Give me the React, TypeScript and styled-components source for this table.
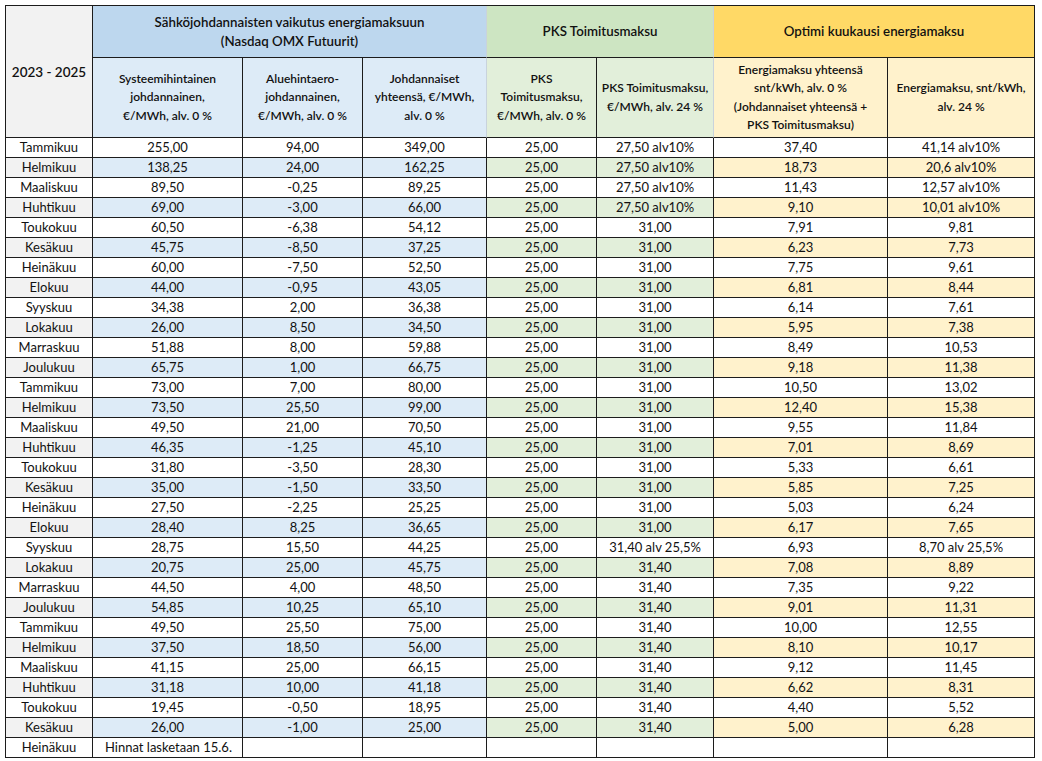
import React from 'react'
import styled, { createGlobalStyle } from 'styled-components'

const GlobalStyle = createGlobalStyle`
  html, body {
    margin: 0;
    background: #ffffff;
  }
  body {
    padding: 5px 0 0 5px;
    font-family: Lato, 'Liberation Sans', sans-serif;
    color: #111111;
  }
`

type Group = 'year' | 'blue' | 'green' | 'yellow'

const HEAD: Record<Group, string> = {
  year: '#f2f2f2',
  blue: '#bdd7ee',
  green: '#cde5c2',
  yellow: '#ffd966',
}

const LIGHT: Record<Group, string> = {
  year: '#f2f2f2',
  blue: '#ddebf7',
  green: '#e2efda',
  yellow: '#fff2cc',
}

const DARK = '#1c1c1c'
const SOFT = '#c9d3dc'

const Sheet = styled.table`
  border-collapse: separate;
  border-spacing: 0;
  table-layout: fixed;
  width: 1030px;
  border-top: 1px solid ${DARK};
  border-left: 1px solid ${DARK};
  font-size: 13px;
`

const GroupHead = styled.th<{ $group: Group; $soft?: boolean }>`
  height: 51px;
  padding: 0 6px;
  background: ${(p) => HEAD[p.$group]};
  border-right: 1px solid ${(p) => (p.$soft ? SOFT : DARK)};
  border-bottom: 1px solid ${DARK};
  font-size: 13.3px;
  font-weight: 600;
  line-height: 19px;
  text-align: center;
  vertical-align: middle;
`

const YearHead = styled.th`
  padding: 0 2px;
  background: ${HEAD.year};
  border-right: 1px solid ${DARK};
  border-bottom: 1px solid ${DARK};
  font-size: 13.5px;
  font-weight: 600;
  text-align: center;
  vertical-align: middle;
`

const SubHead = styled.th<{ $group: Group; $soft?: boolean }>`
  height: 79px;
  padding: 0 2px;
  background: ${(p) => LIGHT[p.$group]};
  border-right: 1px solid ${(p) => (p.$soft ? SOFT : DARK)};
  border-bottom: 1px solid ${DARK};
  font-size: 12px;
  font-weight: 600;
  line-height: 18.5px;
  text-align: center;
  vertical-align: middle;
`

const Cell = styled.td<{ $bg: string; $left?: boolean }>`
  height: 19px;
  padding: ${(p) => (p.$left ? '0 0 0 12px' : '0')};
  background: ${(p) => p.$bg};
  border-right: 1px solid ${DARK};
  border-bottom: 1px solid ${DARK};
  text-align: ${(p) => (p.$left ? 'left' : 'center')};
  vertical-align: middle;
  white-space: nowrap;
  overflow: visible;
  line-height: 19px;
`

const widths = [87, 150, 120, 124, 110, 117, 174, 147]
const groups: Group[] = ['year', 'blue', 'blue', 'blue', 'green', 'green', 'yellow', 'yellow']

const rows: string[][] = [
  ['Tammikuu', '255,00', '94,00', '349,00', '25,00', '27,50 alv10%', '37,40', '41,14 alv10%'],
  ['Helmikuu', '138,25', '24,00', '162,25', '25,00', '27,50 alv10%', '18,73', '20,6 alv10%'],
  ['Maaliskuu', '89,50', '-0,25', '89,25', '25,00', '27,50 alv10%', '11,43', '12,57 alv10%'],
  ['Huhtikuu', '69,00', '-3,00', '66,00', '25,00', '27,50 alv10%', '9,10', '10,01 alv10%'],
  ['Toukokuu', '60,50', '-6,38', '54,12', '25,00', '31,00', '7,91', '9,81'],
  ['Kesäkuu', '45,75', '-8,50', '37,25', '25,00', '31,00', '6,23', '7,73'],
  ['Heinäkuu', '60,00', '-7,50', '52,50', '25,00', '31,00', '7,75', '9,61'],
  ['Elokuu', '44,00', '-0,95', '43,05', '25,00', '31,00', '6,81', '8,44'],
  ['Syyskuu', '34,38', '2,00', '36,38', '25,00', '31,00', '6,14', '7,61'],
  ['Lokakuu', '26,00', '8,50', '34,50', '25,00', '31,00', '5,95', '7,38'],
  ['Marraskuu', '51,88', '8,00', '59,88', '25,00', '31,00', '8,49', '10,53'],
  ['Joulukuu', '65,75', '1,00', '66,75', '25,00', '31,00', '9,18', '11,38'],
  ['Tammikuu', '73,00', '7,00', '80,00', '25,00', '31,00', '10,50', '13,02'],
  ['Helmikuu', '73,50', '25,50', '99,00', '25,00', '31,00', '12,40', '15,38'],
  ['Maaliskuu', '49,50', '21,00', '70,50', '25,00', '31,00', '9,55', '11,84'],
  ['Huhtikuu', '46,35', '-1,25', '45,10', '25,00', '31,00', '7,01', '8,69'],
  ['Toukokuu', '31,80', '-3,50', '28,30', '25,00', '31,00', '5,33', '6,61'],
  ['Kesäkuu', '35,00', '-1,50', '33,50', '25,00', '31,00', '5,85', '7,25'],
  ['Heinäkuu', '27,50', '-2,25', '25,25', '25,00', '31,00', '5,03', '6,24'],
  ['Elokuu', '28,40', '8,25', '36,65', '25,00', '31,00', '6,17', '7,65'],
  ['Syyskuu', '28,75', '15,50', '44,25', '25,00', '31,40 alv 25,5%', '6,93', '8,70 alv 25,5%'],
  ['Lokakuu', '20,75', '25,00', '45,75', '25,00', '31,40', '7,08', '8,89'],
  ['Marraskuu', '44,50', '4,00', '48,50', '25,00', '31,40', '7,35', '9,22'],
  ['Joulukuu', '54,85', '10,25', '65,10', '25,00', '31,40', '9,01', '11,31'],
  ['Tammikuu', '49,50', '25,50', '75,00', '25,00', '31,40', '10,00', '12,55'],
  ['Helmikuu', '37,50', '18,50', '56,00', '25,00', '31,40', '8,10', '10,17'],
  ['Maaliskuu', '41,15', '25,00', '66,15', '25,00', '31,40', '9,12', '11,45'],
  ['Huhtikuu', '31,18', '10,00', '41,18', '25,00', '31,40', '6,62', '8,31'],
  ['Toukokuu', '19,45', '-0,50', '18,95', '25,00', '31,40', '4,40', '5,52'],
  ['Kesäkuu', '26,00', '-1,00', '25,00', '25,00', '31,40', '5,00', '6,28'],
]

const App = () => {
  return (
    <>
      <GlobalStyle />
      <Sheet>
        <colgroup>
          {widths.map((w, i) => (
            <col key={i} style={{ width: w }} />
          ))}
        </colgroup>
        <thead>
          <tr>
            <YearHead rowSpan={2}>2023 - 2025</YearHead>
            <GroupHead $group="blue" $soft colSpan={3}>
              Sähköjohdannaisten vaikutus energiamaksuun
              <br />
              (Nasdaq OMX Futuurit)
            </GroupHead>
            <GroupHead $group="green" $soft colSpan={2}>
              PKS Toimitusmaksu
            </GroupHead>
            <GroupHead $group="yellow" colSpan={2}>
              Optimi kuukausi energiamaksu
            </GroupHead>
          </tr>
          <tr>
            <SubHead $group="blue">
              Systeemihintainen
              <br />
              johdannainen,
              <br />
              €/MWh, alv. 0 %
            </SubHead>
            <SubHead $group="blue">
              Aluehintaero-
              <br />
              johdannainen,
              <br />
              €/MWh, alv. 0 %
            </SubHead>
            <SubHead $group="blue" $soft>
              Johdannaiset
              <br />
              yhteensä, €/MWh,
              <br />
              alv. 0 %
            </SubHead>
            <SubHead $group="green">
              PKS
              <br />
              Toimitusmaksu,
              <br />
              €/MWh, alv. 0 %
            </SubHead>
            <SubHead $group="green" $soft>
              PKS Toimitusmaksu,
              <br />
              €/MWh, alv. 24 %
            </SubHead>
            <SubHead $group="yellow">
              Energiamaksu yhteensä
              <br />
              snt/kWh, alv. 0 %
              <br />
              (Johdannaiset yhteensä +
              <br />
              PKS Toimitusmaksu)
            </SubHead>
            <SubHead $group="yellow">
              Energiamaksu, snt/kWh,
              <br />
              alv. 24 %
            </SubHead>
          </tr>
        </thead>
        <tbody>
          {rows.map((row, r) => (
            <tr key={r}>
              {row.map((v, c) => (
                <Cell key={c} $bg={r % 2 === 1 ? LIGHT[groups[c]] : '#ffffff'}>
                  {v}
                </Cell>
              ))}
            </tr>
          ))}
          <tr>
            <Cell $bg="#ffffff">Heinäkuu</Cell>
            <Cell $bg="#ffffff" $left>
              Hinnat lasketaan 15.6.
            </Cell>
            {widths.slice(2).map((_, i) => (
              <Cell key={i} $bg="#ffffff" />
            ))}
          </tr>
        </tbody>
      </Sheet>
    </>
  )
}

export default App
